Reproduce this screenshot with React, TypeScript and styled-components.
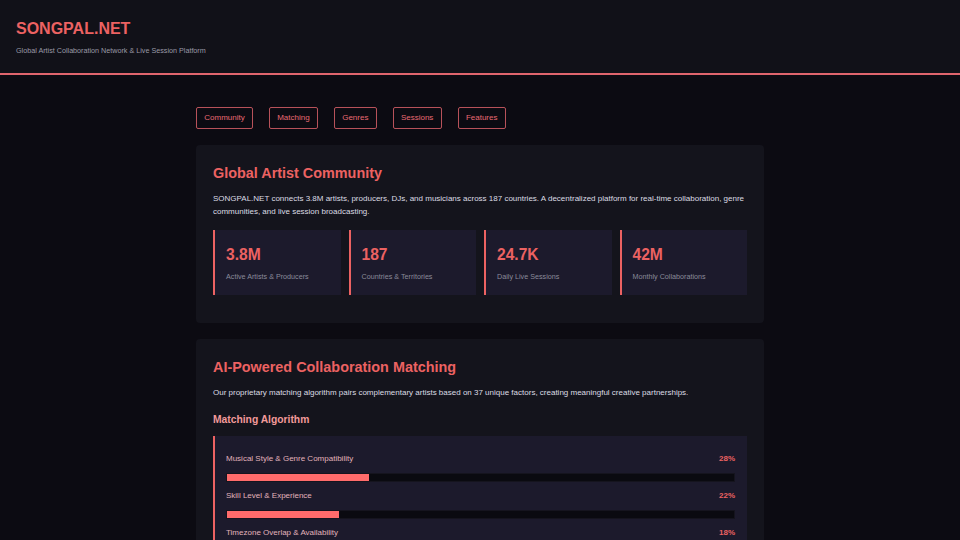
import React from 'react';
import styled, { createGlobalStyle } from 'styled-components';

const GlobalStyle = createGlobalStyle`
	body {
		margin: 0;
		background: #0c0b12;
		font-family: 'Liberation Sans', Arial, sans-serif;
		color: #d8d8e0;
	}
`;

const Header = styled.header`
	background: #111118;
	padding: 19px 16px 18px;
	border-bottom: 2px solid #e0656d;

	> h1 {
		margin: 0 0 7px;
		font-size: 16px;
		line-height: 20px;
		font-weight: 700;
		color: #ec6262;
	}

	> p {
		margin: 0;
		font-size: 7.2px;
		line-height: 9px;
		color: #9a9aa6;
	}
`;

const Main = styled.main`
	width: 568px;
	margin: 0 auto;
	padding-top: 32px;
	display: flex;
	flex-direction: column;
	gap: 16px;
`;

const Nav = styled.nav`
	display: flex;
	gap: 16px;
`;

const NavButton = styled.button`
	font-family: inherit;
	font-size: 8px;
	line-height: 12px;
	padding: 4px 7.25px;
	background: transparent;
	color: #e86a72;
	border: 1px solid #b8525a;
	border-radius: 2px;
`;

const Section = styled.section`
	background: #14141c;
	border-radius: 4px;
	padding: 20px 17px 28px;

	> h2 {
		margin: 0 0 10px;
		font-size: 14.4px;
		line-height: 17px;
		font-weight: 700;
		color: #ec6262;
	}

	> p {
		margin: 0;
		font-size: 8px;
		line-height: 13px;
		color: #dcdce4;
	}

	> h3 {
		margin: 14px 0 10px;
		font-size: 10.3px;
		line-height: 13px;
		font-weight: 700;
		color: #f29a9a;
	}
`;

const StatGrid = styled.div`
	display: grid;
	grid-template-columns: repeat(4, 1fr);
	gap: 8px;
	margin-top: 12px;
`;

const Stat = styled.div`
	background: #1c1a2c;
	border-left: 2px solid #ec6262;
	height: 65px;
	box-sizing: border-box;
	padding: 15px 11px 0;

	> strong {
		display: block;
		font-size: 15.6px;
		line-height: 19px;
		color: #ec6262;
	}

	> span {
		display: block;
		margin-top: 8px;
		font-size: 7.2px;
		line-height: 10px;
		color: #8a8a9a;
	}
`;

const AlgoBox = styled.div`
	background: #1c1a2c;
	border-left: 2px solid #ec6262;
	padding: 17px 12px 0 11px;
	display: flex;
	flex-direction: column;
	gap: 8px;
`;

const Factor = styled.div`
	display: flex;
	flex-direction: column;
	gap: 8px;
`;

const FactorHead = styled.div`
	display: flex;
	justify-content: space-between;
	font-size: 8px;
	line-height: 12px;
	color: #e2b3bb;

	> b {
		color: #ec6262;
	}
`;

const Track = styled.div`
	height: 9px;
	background: #0a0a10;
	border: 1px solid #15141e;
	box-sizing: border-box;

	> div {
		height: 100%;
		background: #ff6b6b;
	}
`;

const stats = [
	{ value: '3.8M', label: 'Active Artists & Producers' },
	{ value: '187', label: 'Countries & Territories' },
	{ value: '24.7K', label: 'Daily Live Sessions' },
	{ value: '42M', label: 'Monthly Collaborations' },
];

const factors = [
	{ name: 'Musical Style & Genre Compatibility', pct: 28 },
	{ name: 'Skill Level & Experience', pct: 22 },
	{ name: 'Timezone Overlap & Availability', pct: 18 },
	{ name: 'Creative Goals & Project Type', pct: 16 },
];

export default function App() {
	return (
		<>
			<GlobalStyle />
			<Header>
				<h1>SONGPAL.NET</h1>
				<p>Global Artist Collaboration Network &amp; Live Session Platform</p>
			</Header>
			<Main>
				<Nav>
					{['Community', 'Matching', 'Genres', 'Sessions', 'Features'].map((item) => (
						<NavButton key={item}>{item}</NavButton>
					))}
				</Nav>
				<Section>
					<h2>Global Artist Community</h2>
					<p>
						SONGPAL.NET connects 3.8M artists, producers, DJs, and musicians across 187 countries. A decentralized
						platform for real-time collaboration, genre communities, and live session broadcasting.
					</p>
					<StatGrid>
						{stats.map((s) => (
							<Stat key={s.label}>
								<strong>{s.value}</strong>
								<span>{s.label}</span>
							</Stat>
						))}
					</StatGrid>
				</Section>
				<Section>
					<h2>AI-Powered Collaboration Matching</h2>
					<p>
						Our proprietary matching algorithm pairs complementary artists based on 37 unique factors, creating
						meaningful creative partnerships.
					</p>
					<h3>Matching Algorithm</h3>
					<AlgoBox>
						{factors.map((f) => (
							<Factor key={f.name}>
								<FactorHead>
									<span>{f.name}</span>
									<b>{f.pct}%</b>
								</FactorHead>
								<Track>
									<div style={{ width: `${f.pct}%` }} />
								</Track>
							</Factor>
						))}
					</AlgoBox>
				</Section>
			</Main>
		</>
	);
}
